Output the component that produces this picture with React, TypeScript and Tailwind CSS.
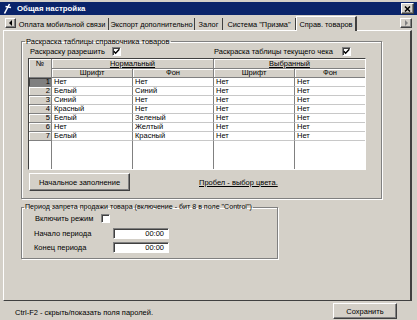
import React from 'react';

const raised =
  'border border-t-white border-l-white border-r-[#404040] border-b-[#404040] shadow-[inset_-1px_-1px_0_#808080]';
const sunken =
  'border border-t-[#808080] border-l-[#808080] border-r-white border-b-white shadow-[inset_1px_1px_0_#404040]';

const rows = [
  ['1', 'Нет', 'Нет'],
  ['2', 'Белый', 'Синий'],
  ['3', 'Синий', 'Нет'],
  ['4', 'Красный', 'Нет'],
  ['5', 'Белый', 'Зеленый'],
  ['6', 'Нет', 'Желтый'],
  ['7', 'Белый', 'Красный'],
];

const CheckBox = ({ checked }: { checked?: boolean }) => (
  <span className={`inline-flex w-[9px] h-[9px] bg-white items-center justify-center ${sunken}`}>
    {checked && (
      <svg width="7" height="7" viewBox="0 0 7 7">
        <path d="M0.8 3.2 L2.6 5.2 L6.3 1.2" stroke="#000" strokeWidth="1.4" fill="none" />
      </svg>
    )}
  </span>
);

const HeadCell = ({ children, className = '' }: { children?: React.ReactNode; className?: string }) => (
  <div
    className={`bg-[#d4d0c8] border-r border-b border-[#808080] shadow-[inset_1px_1px_0_#fff] flex justify-center leading-[8px] ${className}`}
  >
    {children}
  </div>
);

const Cell = ({ children, last }: { children?: React.ReactNode; last?: boolean }) => (
  <div className={`bg-white border-b border-[#c8c8c8] pl-[2px] leading-[8px] ${last ? '' : 'border-r border-r-[#808080]'}`}>
    {children}
  </div>
);

const Tab = ({ w, children }: { w: string; children: React.ReactNode }) => (
  <div className={`${w} h-[12px] border-r border-r-[#404040] flex items-center justify-center whitespace-nowrap text-[7.4px]`}>
    {children}
  </div>
);

export default function App() {
  return (
    <div className="w-[417px] h-[320px] bg-[#d4d0c8] overflow-hidden font-['Liberation_Sans',Arial,sans-serif] text-[7.5px] leading-[9px] text-black flex flex-col">
      {/* title bar */}
      <div className="mt-[2px] h-[13px] bg-[#0a246a] flex items-center pl-[3px] pr-[3px]">
        <svg width="9" height="11" viewBox="0 0 9 11">
          <path d="M1.5 10.5 L6.5 1" stroke="#fff" strokeWidth="1.6" />
          <path d="M2.5 3.5 L8 4.5" stroke="#fff" strokeWidth="1.3" />
        </svg>
        <span className="ml-[5px] font-bold text-white text-[7.8px]">Общая настройка</span>
        <div className={`ml-auto w-[13px] h-[11px] bg-[#d4d0c8] flex items-center justify-center ${raised}`}>
          <svg width="7" height="6" viewBox="0 0 7 6">
            <path d="M1 0.5 L6 5.5 M6 0.5 L1 5.5" stroke="#000" strokeWidth="1.5" />
          </svg>
        </div>
      </div>

      {/* tabs */}
      <div className="h-[15px] flex items-end pl-[5px] relative z-10">
        <div className={`self-start mt-[3px] w-[11px] h-[10px] bg-[#d4d0c8] flex items-center justify-center ${raised}`}>
          <svg width="5" height="6" viewBox="0 0 5 6">
            <path d="M4 0 L1 3 L4 6 Z" fill="#000" />
          </svg>
        </div>
        <Tab w="w-[93px]">Оплата мобильной связи</Tab>
        <Tab w="w-[86px]">Экспорт дополнительно</Tab>
        <Tab w="w-[28px]">Залог</Tab>
        <Tab w="w-[73px]">Система "Призма"</Tab>
        <div className="w-[61px] h-[15px] -mb-[1px] bg-[#d4d0c8] border-t border-l border-t-white border-l-white border-r-2 border-r-[#404040] flex items-center justify-center whitespace-nowrap text-[7.4px]">
          Справ. товаров
        </div>
        <div className={`self-start mt-[3px] ml-auto mr-[5px] w-[12px] h-[10px] bg-[#d4d0c8] flex items-center justify-center ${raised}`}>
          <svg width="5" height="6" viewBox="0 0 5 6">
            <path d="M1 0 L4 3 L1 6 Z" fill="#808080" />
          </svg>
        </div>
      </div>

      {/* page */}
      <div className="ml-[3px] w-[409px] h-[271px] border border-t-white border-l-white border-r-2 border-r-[#404040] border-b-[#404040] pl-[17px] pt-[6px] flex flex-col">
        <fieldset className="w-[361px] h-[162px] border border-[#808080] shadow-[inset_1px_1px_0_#fff,1px_1px_0_#fff]">
          <legend className="ml-[3px] px-[1px] whitespace-nowrap">Раскраска таблицы справочника товаров</legend>
          <div className="mt-[1px] pl-[8px] flex items-center h-[9px] whitespace-nowrap">
            <span className="w-[82px]">Раскраску разрешить</span>
            <CheckBox checked />
            <span className="ml-[93px] w-[128px]">Раскраска таблицы текущего чека</span>
            <CheckBox checked />
          </div>

          <div className="mt-[2px] ml-[6px] w-[338px] border border-t-[#404040] border-l-[#404040] border-r-white border-b-white bg-white grid grid-cols-[23px_81px_81px_81px_70px] grid-rows-[10px_9px_repeat(7,9px)_28px]">
            <HeadCell className="row-span-2 items-start pt-[1px]">№</HeadCell>
            <HeadCell className="col-span-2 items-center">
              <span className="underline">Нормальный</span>
            </HeadCell>
            <HeadCell className="col-span-2 items-center border-r-0">
              <span className="underline">Выбранный</span>
            </HeadCell>
            <HeadCell className="items-center">Шрифт</HeadCell>
            <HeadCell className="items-center">Фон</HeadCell>
            <HeadCell className="items-center">Шрифт</HeadCell>
            <HeadCell className="items-center border-r-0">Фон</HeadCell>
            {rows.map(([n, font, bg], i) => (
              <React.Fragment key={n}>
                <div
                  className={`border-r border-b border-[#808080] text-right pr-[1px] leading-[8px] ${
                    i === 0 ? 'bg-[#808080] shadow-[inset_1px_1px_0_#404040]' : 'bg-[#d4d0c8] shadow-[inset_1px_1px_0_#fff]'
                  }`}
                >
                  {n}
                </div>
                <Cell>{font}</Cell>
                <Cell>{bg}</Cell>
                <Cell>Нет</Cell>
                <Cell last>Нет</Cell>
              </React.Fragment>
            ))}
            <div className="border-r border-[#808080]" />
            <div className="border-r border-[#808080]" />
            <div className="border-r border-[#808080]" />
            <div className="border-r border-[#808080]" />
            <div />
          </div>

          <div className="mt-[3px] ml-[7px] flex items-center whitespace-nowrap">
            <button className={`w-[101px] h-[18px] bg-[#d4d0c8] ${raised}`}>Начальное заполнение</button>
            <span className="ml-[69px] underline">Пробел - выбор цвета.</span>
          </div>
        </fieldset>

        <fieldset className="mt-[4px] w-[257px] h-[56px] border border-[#808080] shadow-[inset_1px_1px_0_#fff,1px_1px_0_#fff]">
          <legend className="ml-[2px] px-[1px] whitespace-nowrap text-[7.1px]">
            Период запрета продажи товара (включение - бит 8 в поле "Control")
          </legend>
          <div className="mt-[2px] pl-[13px] flex items-center h-[9px] whitespace-nowrap">
            <span className="w-[66px]">Включить режим</span>
            <CheckBox />
          </div>
          <div className="mt-[5px] pl-[12px] flex items-center h-[11px] whitespace-nowrap">
            <span className="w-[79px]">Начало периода</span>
            <div className={`w-[56px] h-[11px] bg-white text-right pr-[4px] leading-[9px] ${sunken}`}>00:00</div>
          </div>
          <div className="mt-[3px] pl-[12px] flex items-center h-[11px] whitespace-nowrap">
            <span className="w-[79px]">Конец периода</span>
            <div className={`w-[56px] h-[11px] bg-white text-right pr-[4px] leading-[9px] ${sunken}`}>00:00</div>
          </div>
        </fieldset>
      </div>

      {/* status */}
      <div className="h-[19px] pt-[2px] flex items-start whitespace-nowrap">
        <span className="ml-[15px] mt-[5px]">Ctrl-F2 - скрыть/показать поля паролей.</span>
        <button className={`ml-auto mr-[20px] w-[64px] h-[16px] bg-[#d4d0c8] ${raised}`}>Сохранить</button>
      </div>
    </div>
  );
}
